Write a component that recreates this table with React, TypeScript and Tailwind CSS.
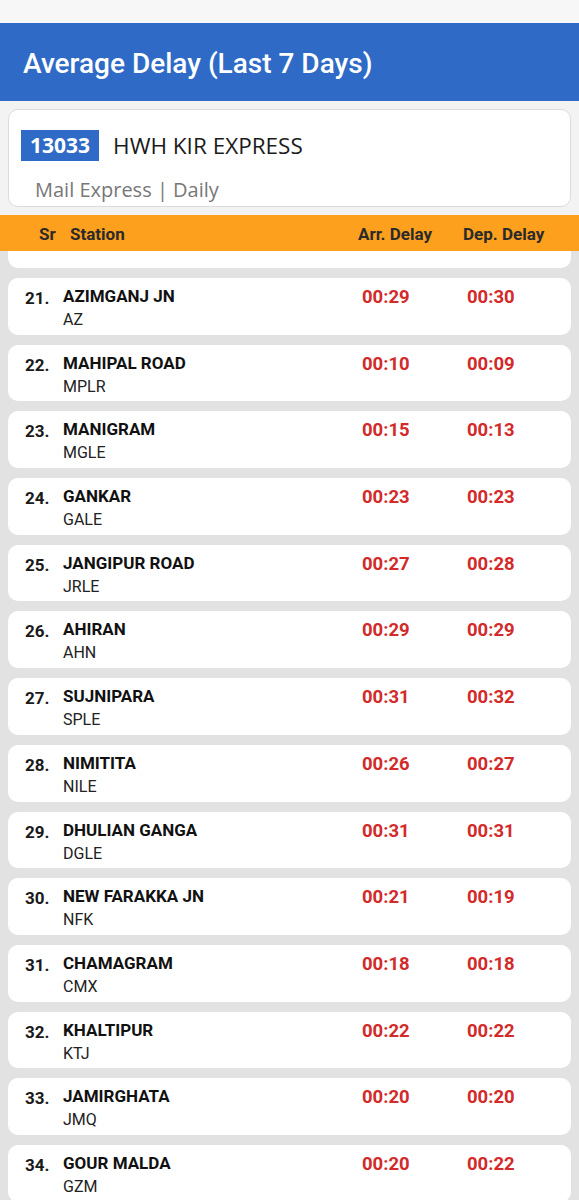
import type { FC } from "react";

type Row = { sr: number; name: string; code: string; arr: string; dep: string };

const rows: Row[] = [
  { sr: 21, name: "AZIMGANJ JN", code: "AZ", arr: "00:29", dep: "00:30" },
  { sr: 22, name: "MAHIPAL ROAD", code: "MPLR", arr: "00:10", dep: "00:09" },
  { sr: 23, name: "MANIGRAM", code: "MGLE", arr: "00:15", dep: "00:13" },
  { sr: 24, name: "GANKAR", code: "GALE", arr: "00:23", dep: "00:23" },
  { sr: 25, name: "JANGIPUR ROAD", code: "JRLE", arr: "00:27", dep: "00:28" },
  { sr: 26, name: "AHIRAN", code: "AHN", arr: "00:29", dep: "00:29" },
  { sr: 27, name: "SUJNIPARA", code: "SPLE", arr: "00:31", dep: "00:32" },
  { sr: 28, name: "NIMITITA", code: "NILE", arr: "00:26", dep: "00:27" },
  { sr: 29, name: "DHULIAN GANGA", code: "DGLE", arr: "00:31", dep: "00:31" },
  { sr: 30, name: "NEW FARAKKA JN", code: "NFK", arr: "00:21", dep: "00:19" },
  { sr: 31, name: "CHAMAGRAM", code: "CMX", arr: "00:18", dep: "00:18" },
  { sr: 32, name: "KHALTIPUR", code: "KTJ", arr: "00:22", dep: "00:22" },
  { sr: 33, name: "JAMIRGHATA", code: "JMQ", arr: "00:20", dep: "00:20" },
  { sr: 34, name: "GOUR MALDA", code: "GZM", arr: "00:20", dep: "00:22" },
];

const StationCard: FC<{ row: Row }> = ({ row }) => (
  <div className="mx-[8px] h-[56.7px] shrink-0 rounded-[10px] bg-white flex pl-[17px] pt-[8px]">
    <div className="w-[38px] pt-[1px] text-[17px] leading-[22px] font-bold text-[#1a1a1a]">
      {row.sr}.
    </div>
    <div className="w-[299px]">
      <div className="text-[17px] leading-[20px] font-bold text-[#111]">{row.name}</div>
      <div className="mt-[3px] text-[16px] leading-[22px] text-[#222]">{row.code}</div>
    </div>
    <div className="w-[105px] text-[18.5px] leading-[22px] font-bold text-[#d32a2a]">
      {row.arr}
    </div>
    <div className="text-[18.5px] leading-[22px] font-bold text-[#d32a2a]">{row.dep}</div>
  </div>
);

const App: FC = () => {
  return (
    <div className="h-[1200px] w-[579px] overflow-hidden bg-[#e2e2e2] font-['Roboto',sans-serif] flex flex-col">
      {/* status strip */}
      <div className="h-[23px] bg-[#f7f7f7] shrink-0" />

      {/* title bar */}
      <div className="h-[78px] bg-[#2f6bc6] flex items-center pl-[23px] pt-[3px] shrink-0">
        <h1 className="text-[28px] font-medium text-white">Average Delay (Last 7 Days)</h1>
      </div>

      {/* train info */}
      <div className="bg-[#f3f3f3] px-[8px] pt-[8px] pb-[8px] shrink-0 font-['Open_Sans',sans-serif]">
        <div className="h-[98px] rounded-[10px] border border-[#dcdcdc] bg-white pt-[19px] pl-[12px]">
          <div className="flex items-center">
            <span className="bg-[#2f6bc6] text-white text-[21px] font-bold leading-[31px] px-[9px]">
              13033
            </span>
            <span className="ml-[14px] text-[22.5px] text-[#1b1b1b]">HWH KIR EXPRESS</span>
          </div>
          <div className="mt-[12px] pl-[14px] text-[20px] text-[#777]">Mail Express | Daily</div>
        </div>
      </div>

      {/* table header */}
      <div className="h-[36px] bg-[#fda01d] flex items-center pl-[39px] pt-[3px] text-[17px] font-bold text-[#2a2a2a] shrink-0">
        <div className="w-[31px]">Sr</div>
        <div className="w-[288px]">Station</div>
        <div className="w-[105px]">Arr. Delay</div>
        <div>Dep. Delay</div>
      </div>

      {/* list */}
      <div className="flex flex-col gap-[10px]">
        <div className="mx-[8px] h-[17px] shrink-0 rounded-b-[10px] bg-white" />
        {rows.map((r) => (
          <StationCard key={r.sr} row={r} />
        ))}
      </div>
    </div>
  );
};

export default App;
